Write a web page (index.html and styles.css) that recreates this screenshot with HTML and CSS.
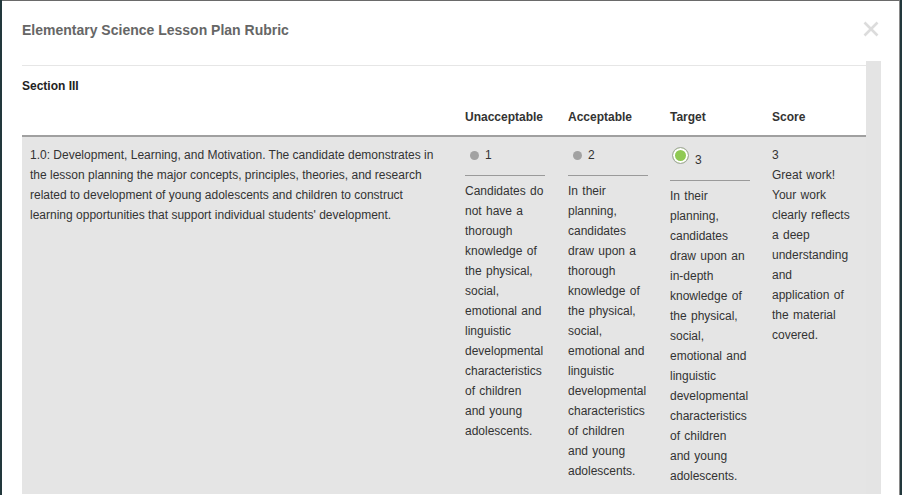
FILE: index.html
```html
<!DOCTYPE html>
<html>
<head>
<meta charset="utf-8">
<link rel="stylesheet" href="styles.css">
</head>
<body>
<div class="modal">
  <div class="modal-header">
    <h1 class="title">Elementary Science Lesson Plan Rubric</h1>
    <svg class="close" width="16" height="16" viewBox="0 0 16 16"><path d="M1.5 1.5 L14.5 14.5 M14.5 1.5 L1.5 14.5" stroke="#dcdcdc" stroke-width="2.6" fill="none"/></svg>
  </div>
  <div class="modal-body">
    <div class="content">
      <div class="section">Section III</div>
      <div class="rubric">
        <div class="hcell first"></div>
        <div class="hcell">Unacceptable</div>
        <div class="hcell">Acceptable</div>
        <div class="hcell">Target</div>
        <div class="hcell last">Score</div>

        <div class="cell first">1.0: Development, Learning, and Motivation. The candidate demonstrates in the lesson planning the major concepts, principles, theories, and research related to development of young adolescents and children to construct learning opportunities that support individual students' development.</div>
        <div class="cell wide">
          <div class="choice"><span class="dot"></span><span>1</span></div>
          <hr class="rule">
          <div class="desc">Candidates do not have a thorough knowledge of the physical, social, emotional and linguistic developmental characteristics of children and young adolescents.</div>
        </div>
        <div class="cell">
          <div class="choice"><span class="dot"></span><span>2</span></div>
          <hr class="rule">
          <div class="desc">In their planning, candidates draw upon a thorough knowledge of the physical, social, emotional and linguistic developmental characteristics of children and young adolescents.</div>
        </div>
        <div class="cell">
          <div class="choice selected"><span class="radio-on"></span><span>3</span></div>
          <hr class="rule">
          <div class="desc">In their planning, candidates draw upon an in-depth knowledge of the physical, social, emotional and linguistic developmental characteristics of children and young adolescents.</div>
        </div>
        <div class="cell last">
          <div class="desc">3<br>Great work! Your work clearly reflects a deep understanding and application of the material covered.</div>
        </div>
      </div>
    </div>
    <div class="track"></div>
  </div>
</div>
</body>
</html>
```
FILE: styles.css
```css
html, body {
  margin: 0;
  padding: 0;
}
body {
  background: #22383c;
  font-family: "Liberation Sans", Arial, Helvetica, sans-serif;
  color: #333;
  font-size: 12px;
  line-height: 20px;
}
.modal {
  margin-left: 2px;
  width: 897px;
  border-top: 1px solid #6a6a6a;
  border-right: 1px solid #8a8a8a;
  background: #fff;
  min-height: 494px;
}
.modal-header {
  display: flex;
  justify-content: space-between;
  align-items: center;
  padding: 19px 20px 21px 20px;
}
.title {
  margin: 0;
  font-size: 14px;
  line-height: 20px;
  font-weight: bold;
  color: #666;
}
.close {
  display: block;
  margin-top: -3px;
}
.modal-body {
  display: flex;
  padding: 0 18px 0 20px;
}
.content {
  flex: 0 0 844px;
  padding-top: 4px;
}
.track {
  flex: 0 0 15px;
  background: #e4e4e4;
}
.section {
  border-top: 1px solid #e6e6e6;
  margin: 0;
  padding-top: 10px;
  font-weight: bold;
  color: #222;
}
.rubric {
  display: grid;
  grid-template-columns: 433px 103px 102px 102px 104px;
}
.hcell {
  font-weight: bold;
  color: #333;
  padding: 11px 12px 8px 10px;
  border-bottom: 2px solid #a0a0a0;
}
.cell {
  background: #e5e5e5;
  padding: 8px 12px 8px 10px;
}
.cell.wide {
  padding-right: 13px;
}
.cell.first {
  padding: 8px 8px 8px 8px;
}
.cell.last, .hcell.last {
  padding-right: 14px;
}
.choice {
  display: flex;
  align-items: center;
  height: 20px;
}
.dot {
  display: inline-block;
  width: 9px;
  height: 9px;
  border-radius: 50%;
  background: #a2a2a2;
  margin-left: 5px;
  margin-right: 6px;
}
.choice.selected {
  height: 25px;
  align-items: flex-end;
}
.radio-on {
  align-self: flex-start;
  box-sizing: border-box;
  width: 17px;
  height: 17px;
  margin-top: 2px;
  margin-left: 2px;
  margin-right: 6px;
  border-radius: 50%;
  border: 1px solid #a8a8a8;
  background: #8fc953;
  box-shadow: inset 0 0 0 2px #fff;
}
.rule {
  border: 0;
  border-top: 1px solid #9a9a9a;
  margin: 10px 0 5px 0;
  height: 0;
}
.desc {
  margin: 0;
  word-spacing: 1px;
}
```
